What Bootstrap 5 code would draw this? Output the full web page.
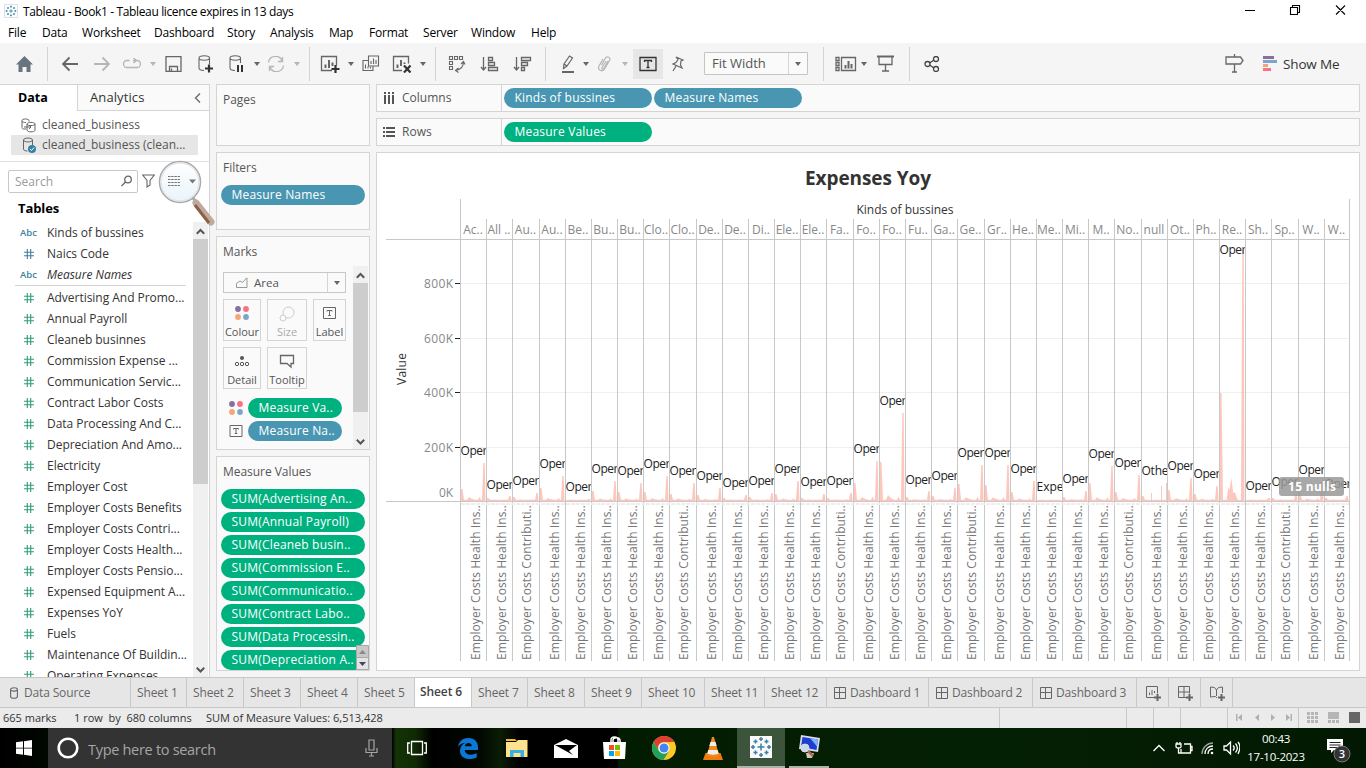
<!DOCTYPE html>
<html lang="en">
<head>
<meta charset="utf-8">
<title>Tableau - Book1</title>
<link href="https://cdn.jsdelivr.net/npm/bootstrap@5.3.0/dist/css/bootstrap.min.css" rel="stylesheet">
<style>
body{width:1366px;height:768px;overflow:hidden;font:12px/20px "Open Sans","Noto Sans",sans-serif;color:#333;background:#f5f5f5}
svg{display:block;flex:none}
.ln{fill:none;stroke:#666;stroke-width:1.3}
.titlebar{height:22px;background:#fff;color:#000;letter-spacing:-.36px}
.titlebar span{margin-left:1px;padding-top:2px}
.menus{height:21px;background:#fff;color:#000;display:grid;grid-template-columns:34px 40px 72px 73px 43px 59px 40px 54px 48px 60px 60px;padding-left:8px;line-height:22px;letter-spacing:-.2px}
.tools{height:41px;display:grid;align-items:center;grid-template-columns:47px 14px 32px 29px 28px 15px 33px 31px 25px 13px 27px 15px 11px 28px 14px 30px 28px 15px 13px 32px 33px 32px 16px 22px 14px 25px 11px 38px 33px 119px 12px 26px 16px 32px 15px 301px 38px 1fr}
.vsep{width:1px;height:34px;background:#d4d4d4}
.car{width:0;height:0;border:3px solid transparent;border-top:4px solid #666;border-bottom:0}
.car.off{border-top-color:#b5b5b5}
.tbtn{width:30px;height:30px;background:#e6e6e6;padding:5px 5px}
.fit{width:104px;height:23px;border:1px solid #c4c4c4;border-radius:1px;background:#fafafa;font-size:13px;line-height:21px;color:#555}
.boxcar{border-left:1px solid #d4d4d4;height:100%;width:19px}
.side{width:210px;background:#fff;border-top:1px solid #d4d4d4;border-right:1px solid #d4d4d4}
.side-tabs{height:26px;font-size:13px;line-height:25px;color:#333}
.side-tabs .on{width:77px;padding-left:18px;font-weight:700;color:#000;font-size:12.5px}
.side-tabs .off{width:132px;padding-left:12px;background:#fafafa;border-left:1px solid #d4d4d4;border-bottom:1px solid #d4d4d4;letter-spacing:.1px}
.src{height:20px;margin:0 11px;padding-left:10px;gap:6px;color:#555}
.src.sel{background:#e6e6e6}
.finder{width:130px;height:23px;border:1px solid #c8c8c8;border-radius:2px;color:#9a9a9a;padding-left:6px;line-height:21px}
.fld{height:21px;line-height:21px;padding-left:20px;color:#333;letter-spacing:-.03px}
.fld b{width:27px;font-size:9.5px;color:#3e7f9e;font-weight:600}
.fld span{white-space:nowrap}
.sbar{width:15px;background:#f0f0f0}
.sbar u{display:block;background:#cdcdcd}
.shelf{background:#fafafa;border:1px solid #d4d4d4;color:#555}
.mid{width:154px;gap:6px}
.mid .hd{padding-left:6px;line-height:30px;height:32px;letter-spacing:-.04px}
.pill{height:20px;border-radius:10px;background:#4996b2;color:#fff;padding-left:10.5px;line-height:19px;white-space:nowrap;overflow:hidden;font-weight:500;letter-spacing:.2px}
.pill.g{background:#00b180}
.mksel{width:123px;height:21px;border:1px solid #c8c8c8;line-height:19px;font-size:11.5px}
.mk{height:42px;border:1px solid #d4d4d4;text-align:center;font-size:11px;line-height:14px;padding-top:6px}
.mk svg{margin:0 auto 3px}
.main-col{gap:6px;width:984px}
.shelf-row{height:28px}
.shelf-row .lab{width:125px;height:26px;border-right:1px solid #d4d4d4;line-height:26px;gap:7px;padding-left:6px;font-size:12px}
.view{background:#fff;border:1px solid #d4d4d4;height:519px}
.sheets{height:31px;background:#e6e6e6;border-top:1px solid #c8c8c8;border-bottom:1px solid #c8c8c8;display:grid;grid-template-columns:131px 56px 57px 57px 57px 57px 57px 56px 57px 57px 63px 60px 62px 102px 104px 104px 32px 32px 32px 1fr;line-height:30px;color:#666}
.sheets>div{border-right:1px solid #c8c8c8;padding-left:6px;white-space:nowrap;overflow:hidden;letter-spacing:-.15px}
.sheets>div:last-child{border:0}
.sheets .cur{background:#fff;font-weight:600;color:#444;letter-spacing:-.1px;line-height:27px;padding-left:5px}
.status{height:20px;background:#ebebeb;display:grid;grid-template-columns:74px 132px 794px 127px 27px 27px 47px 71px 1fr;font-size:11px;line-height:20px;color:#333}
.status>div:nth-child(n+3):nth-child(-n+8){border-right:1px solid #c8c8c8}
.task{height:40px;color:#fff;background:linear-gradient(90deg,#000 0,#010701 48px,#000 392px,#143307 396px,#102a04 415px,#000 432px,#020802 480px,#0a1c05 500px,#000 520px,#000 617px,#021c02 619px,#042004 1000px,#021802)}
.ask{width:344px;background:#333;color:#a6a6a6;font-size:14.5px;line-height:40px}
.tk{width:49px;height:40px}
.edge-slot{margin-left:2px}
.hot{background:#3c533c;border-bottom:2px solid #a9b5a9;width:48px}
.showme{font-size:13.5px;margin-left:6px;color:#333;letter-spacing:-.15px}
.tables{font-weight:700;font-size:13px;color:#000;padding-left:18px;height:22px;line-height:17px;letter-spacing:-.1px}
.lens{position:absolute;left:158px;top:-2px;z-index:5}
.findrow{z-index:5;height:40px;margin-top:6px}
.mks{padding-left:6px;padding-top:3px}
.marea{margin-left:12px!important}
.mkgrid{display:grid;grid-template-columns:38px 40px 33px;gap:6px;margin-top:6px}
.mkp{margin-top:9px}.mkp+.mkp{margin-top:3px}
.mkp svg{margin:0 5px 0 6px}.mkp .pill{width:94px}
.pill.top{width:148px;margin-left:2px}
#mv .pill{margin:0 4px 3px}
.ds{padding-left:9px!important;gap:5px}
.db{padding-left:7px!important;gap:4px}
.nw svg{margin:8px 0 0 3px}
.last{width:40px;margin-left:4px;border-bottom:2px solid #a9b5a9}
.clk{font-size:11.500px;line-height:18px;width:74px;margin-left:-1px;letter-spacing:-.25px}
.ntf{margin:4px 12px 0 13px}
</style>
</head>
<body class="d-flex flex-column">
<svg width="0" height="0" class="position-absolute"><defs>
<symbol id="tb" viewBox="0 0 22 22"><path fill="none" stroke-width="1.500" stroke="#3a7fa8" d="M11 7.500v7M7.500 11h7M11 1v4M9 3h4M11 17v4M9 19h4M3 9v4M1 11h4M19 9v4M17 11h4M5.500 3.500v4M3.500 5.500h4M16.500 3.500v4M14.500 5.500h4M5.500 14.500v4M3.500 16.500h4M16.500 14.500v4M14.500 16.500h4"/></symbol>
<symbol id="hash" viewBox="0 0 10 10"><path fill="none" stroke="currentColor" stroke-width="1.1" d="M3.300 0v10M6.700 0v10M0 3.300h10M0 6.700h10"/></symbol>
<symbol id="cyl" viewBox="0 0 10 12"><path class="ln" style="stroke-width:1.1" d="M1.600 2.500v7c0 2.400 6.800 2.400 6.800 0v-7C8.400.200 1.600.200 1.600 2.500s6.800 2 6.800 0"/></symbol>
<symbol id="dash" viewBox="0 0 12 12"><path class="ln" style="stroke-width:1" d="M.5.5h11v11H.5zM.5 5.500h11M5.500.5v11"/></symbol>
<symbol id="dots" viewBox="0 0 14 14"><circle cx="3" cy="3" r="2.900" fill="#87709b"/><circle cx="11" cy="3" r="2.900" fill="#fb7182"/><circle cx="3" cy="11" r="2.900" fill="#f6a576"/><circle cx="11" cy="11" r="2.900" fill="#7ea4cc"/></symbol>
<symbol id="tee" viewBox="0 0 13 12"><path class="ln" style="stroke-width:1" d="M.5.5h12v11H.5zM4 4.500v-1h5v1M6.500 3.500v5M5.200 8.500h2.600"/></symbol>
<symbol id="up" viewBox="0 0 9 6"><path fill="none" stroke="#555" stroke-width="2" d="M.8 5.200 4.500 1.500l3.700 3.700"/></symbol>
</defs></svg>

<div class="titlebar d-flex align-items-center justify-content-between">
 <div class="d-flex align-items-center"><svg class="ms-1 me-1 border" width="14" height="14"><use href="#tb"/></svg><span>Tableau - Book1 - Tableau licence expires in 13 days</span></div>
 <svg width="122" height="22" fill="none" stroke="#000" stroke-width="1.100"><path d="M1 10.500h10M46.500 7.500h7v7h-7zM48.500 7.500v-2h7v7h-2M92 5.500l9 9M101 5.500l-9 9"/></svg>
</div>
<div class="menus"><span>File</span><span>Data</span><span>Worksheet</span><span>Dashboard</span><span>Story</span><span>Analysis</span><span>Map</span><span>Format</span><span>Server</span><span>Window</span><span>Help</span></div>

<div class="tools">
 <svg class="ms-3" width="17" height="16"><path fill="#6a7480" d="M8.500 0 17 8.500h-2.500V16h-4v-5h-4v5h-4V8.500H0z"/></svg>
 <i class="vsep"></i>
 <svg width="18" height="16" class="ln" style="stroke-width:1.800"><path d="M17 8H2M8.500 1.500 2 8l6.500 6.500"/></svg>
 <svg width="18" height="16" fill="none" stroke="#b5b5b5" stroke-width="1.800"><path d="M1 8h15M9.500 1.500 16 8l-6.500 6.500"/></svg>
 <svg width="20" height="12" fill="none" stroke="#b5b5b5" stroke-width="1.300"><path d="M7.500 2.500H5a3.500 3.500 0 0 0 0 7h10a3.500 3.500 0 0 0 0-7h-4M11.500 0l3 2.500-3 2.500"/></svg>
 <i class="car off"></i>
 <svg width="17" height="16" class="ln"><path d="M1 .7h15v14.600H1zM4.500 15v-4.500h8V15M6.500 12.500V15"/></svg>
 <svg width="18" height="20" class="ln" style="stroke-width:1.100"><path d="M1 4v10c0 2 2 2.500 5 2.500M11.500 10V4C11.500 1 1 1 1 4s10.500 3 10.500 0"/><path stroke="#333" style="stroke-width:2.200" d="M11 10.500v8M7 14.500h8"/></svg>
 <svg width="18" height="20" class="ln" style="stroke-width:1.100"><path d="M1 4v10c0 2 2 2.500 5 2.500M11.500 9V4C11.500 1 1 1 1 4s10.500 3 10.500 0"/><path stroke="#333" style="stroke-width:2" d="M9 11v7M13 11v7"/></svg>
 <i class="car"></i>
 <svg width="18" height="16" fill="none" stroke="#b5b5b5" stroke-width="1.300"><path d="M1.500 6.500A7 7 0 0 1 15 5M16.500 9.500A7 7 0 0 1 3 11M15.500 1v4.500H11M2.500 15v-4.500H7"/></svg>
 <i class="car off"></i>
 <i class="vsep"></i>
 <svg width="20" height="18" class="ln"><path d="M12 15.500H1.500V1.500h15v9"/><path stroke-width="2" d="M5.500 13V9.500M9 13V5M12.500 11V7.500"/><path stroke="#333" stroke-width="2.200" d="M15.500 10v8M11.500 14h8"/></svg>
 <i class="car"></i>
 <svg width="18" height="17" class="ln" style="stroke-width:1.100"><path d="M6.500 1h10v10h-10zM6.500 5.500H1v10h10V11M9 9V6M11.500 9V3.500M14 9V5M3.500 13.500v-4M6 13.500v-2M8.500 13.500v-1.500"/></svg>
 <svg width="20" height="18" class="ln"><path d="M10 15.500H1.500V1.500h15v7"/><path stroke-width="2" d="M5.500 13V9.500M9 11V5M12.500 9V7.500"/><path stroke="#333" stroke-width="2.200" d="m12 10.500 6.500 7M18.500 10.500l-6.500 7"/></svg>
 <i class="car"></i>
 <i class="vsep"></i>
 <svg width="18" height="18" class="ln" style="stroke-width:1.100"><path d="M1.500 1.500h3v3h-3zM6.500 1.500h3v3h-3zM11.500 1.500h3v3h-3zM1.500 6.500h3v3h-3zM1.500 11.500h3v3h-3zM15.500 7c0 5-3 7.500-7.500 8.500M13 9l2.500-2.500L17 9.500M10.500 13 7.500 15.500l3 2"/></svg>
 <svg width="20" height="16" class="ln"><path d="M3.500 1v13M1 11l2.500 3L6 11M8.500 1.500h4v3h-4zM8.500 6.500h6v3h-6zM8.500 11.500h9v3h-9z"/></svg>
 <svg width="20" height="16" class="ln"><path d="M3.500 1v13M1 11l2.500 3L6 11M8.500 1.500h9v3h-9zM8.500 6.500h6v3h-6zM8.500 11.500h3v3h-3z"/></svg>
 <i class="vsep"></i>
 <svg width="14" height="18" class="ln" style="stroke-width:1.200"><path d="m3 9 5.500-8 3 2L6 11l-3.500 2.500zM3 9l3 2"/><path style="stroke-width:2" d="M1 17h12"/></svg>
 <i class="car"></i>
 <svg width="16" height="17" fill="none" stroke="#b5b5b5" stroke-width="1.200"><path d="m4.500 10 4-7c1.500-2.500 5.500-.5 4 2.500l-5 8.500c-2 3.500-7.500 1-5.500-3L6 4M9 6l-4 6.500c-.7 1.500 1 2.200 1.800 1L11 6"/></svg>
 <i class="car off"></i>
 <div class="tbtn"><svg width="20" height="20" fill="none" stroke="#333" stroke-width="1.300"><path d="M2 3.500h16v13H2zM6.500 8V6.500h7V8M10 6.500v7M8.500 13.500h3"/></svg></div>
 <svg width="14" height="16" class="ln" style="stroke-width:1.200"><path d="m5 1 7 3-2 1-.5 4 1.500 3-9-4 3-1.500L7 3.500zM5 10l-3 5"/></svg>
 <div class="fit d-flex align-items-center justify-content-between"><span style="padding-left:7px">Fit Width</span><div class="boxcar d-flex align-items-center justify-content-center"><i class="car"></i></div></div>
 <i class="vsep"></i>
 <svg width="22" height="16" class="ln"><path d="M1 1.500h3v3H1zM1 6.500h3v3H1zM1 11.500h3v3H1zM6.500 1.500h14v13h-14z"/><path stroke-width="2" d="M10.500 12.500V9M13.500 12.500V5M16.500 12.500V8"/></svg>
 <i class="car"></i>
 <svg width="17" height="17" class="ln"><path stroke-width="2" d="M0 1.500h17"/><path d="M2 1.500v8h13v-8M8.500 9.500v6M5 16h7"/></svg>
 <i class="vsep"></i>
 <svg width="16" height="16" class="ln" style="stroke:#444"><circle cx="3.500" cy="8" r="2.500"/><circle cx="12" cy="3" r="2.500"/><circle cx="12" cy="13" r="2.500"/><path d="m5.500 7 4.500-3M5.500 9l4.500 3"/></svg>
 <svg width="20" height="19" class="ln"><path d="M9.500 0v3M1 3h14.500l2.500 3.500-2.500 3.500H1zM9.500 10v8M7 18h5"/></svg>
 <div class="d-flex align-items-center"><svg width="14" height="16"><path fill="#87709b" d="M0 0h11v3H0z"/><path fill="#7ea4cc" d="M0 4h14v3H0z"/><path fill="#f6a576" d="M0 8h5v3H0z"/><path fill="#fb7182" d="M0 12h8v3H0z"/></svg><span class="showme">Show Me</span></div>
</div>

<div class="d-flex" style="height:593px">
 <div class="side d-flex flex-column">
  <div class="side-tabs d-flex"><div class="on">Data</div><div class="off d-flex justify-content-between align-items-center"><span>Analytics</span><svg class="me-2" width="7" height="10" style="position:relative"><path class="ln" d="M6 .5 1.500 5 6 9.500"/></svg></div></div>
  <div class="src d-flex align-items-center mt-1"><svg width="15" height="15"><path class="ln" style="stroke-width:1" d="M5 11H2.500C1.500 11 1 10.500 1 9.500v-7c0-2 7-2 7 0v1M1 3c0 1 2 1.500 4 1.500M6 6v6c0 2.500 8 2.500 8 0V6c0-2.200-8-2.200-8 0s8 2 8 0M3 9h7M8 7l2 2-2 2"/></svg><span>cleaned_business</span></div>
  <div class="src sel d-flex align-items-center"><svg width="15" height="16"><path class="ln" style="stroke-width:1" d="M2.500 3v9c0 1.500 2 2 4 2M11.500 8V3c0-2.600-9-2.600-9 0s9 2.600 9 0"/><circle cx="11" cy="12" r="4" fill="#3581a6"/><path d="m9 12 1.500 1.500L13 10.500" fill="none" stroke="#fff"/></svg><span>cleaned_business (clean...</span></div>
  <div class="border-top findrow d-flex align-items-center ps-2 position-relative">
   <div class="finder d-flex align-items-center justify-content-between"><span>Search</span><svg class="me-1" width="12" height="12"><circle class="ln" cx="7" cy="4.500" r="3.300"/><path class="ln" d="m4.500 7-4 4"/></svg></div>
   <svg class="ms-1" width="13" height="14"><path class="ln" style="stroke-width:1.100" d="M.7 1h11.600L8 6.500V11l-3 2V6.500z"/></svg>
   <svg class="lens" width="62" height="72"><defs><linearGradient id="gl" x1="0" x2="0" y1="0" y2="1"><stop offset="0" stop-color="#fff"/><stop offset="1" stop-color="#e9f4fc"/></linearGradient></defs><path d="m35 38 18 23" stroke="#aaa" stroke-width="3"/><path d="m38 43 15 19" stroke="#c0aa9c" stroke-width="7" stroke-linecap="round"/><path d="m37 45 14 18" stroke="#8a6248" stroke-width="3"/><circle cx="22" cy="22" r="20.500" fill="url(#gl)" stroke="#a9a9a9" stroke-width="1.500"/><circle cx="22" cy="22" r="18.800" fill="none" stroke="#e3e3e3"/><path stroke="#777" stroke-width="1" stroke-dasharray="2.500 .7" d="M10 16.500h12M10 19.500h12M10 22.500h12M10 25.500h12"/><path fill="#777" d="M31 19.500h7l-3.500 4z"/></svg>
  </div>
  <div class="tables">Tables</div>
  <div class="d-flex overflow-hidden flex-grow-1"><div id="fields" class="overflow-hidden" style="width:193px"></div>
   <div class="sbar d-flex flex-column align-items-center"><svg class="my-1" width="9" height="9" style="padding-top:2px"><use href="#up"/></svg><u class="w-100" style="height:245px"></u><svg class="mt-auto mb-1" width="9" height="6" style="transform:scaleY(-1)"><use href="#up"/></svg></div></div>
 </div>

 <div class="mid d-flex flex-column" style="margin-left:6px">
  <div class="shelf" style="height:62px"><div class="hd">Pages</div></div>
  <div class="shelf" style="height:78px"><div class="hd">Filters</div><div class="pill mx-1">Measure Names</div></div>
  <div class="shelf d-flex" style="height:214px">
   <div style="width:136px"><div class="hd">Marks</div>
    <div class="mks">
     <div class="mksel d-flex"><svg class="mt-1 me-2 marea" width="12" height="11"><path fill="none" stroke="#999" d="M.5 10.500v-4L4 4l2.500 1.500 4-4.500h.500v9.500z"/></svg><span class="flex-grow-1" style="margin-left:-2px">Area</span><div class="boxcar d-flex align-items-center justify-content-center" style="width:18px"><i class="car"></i></div></div>
     <div class="mkgrid">
      <div class="mk"><svg width="14" height="16" viewBox="0 0 14 16"><use href="#dots" width="14" height="14"/></svg>Colour</div>
      <div class="mk" style="color:#aaa"><svg width="16" height="16" fill="none" stroke="#ccc"><circle cx="9.500" cy="6.500" r="5.500"/><circle cx="4" cy="12" r="3" fill="#fafafa"/></svg>Size</div>
      <div class="mk"><svg width="14" height="16" viewBox="0 -1 14 16"><use href="#tee" width="13" height="12"/></svg>Label</div>
      <div class="mk"><svg width="16" height="16" fill="none" stroke="#555"><circle cx="8" cy="4" r="2" fill="#555" stroke="none"/><circle cx="3" cy="10" r="1.700"/><circle cx="8" cy="10" r="1.700"/><circle cx="13" cy="10" r="1.700"/></svg>Detail</div>
      <div class="mk"><svg width="16" height="16"><path class="ln" d="M1.500 1.500h13v8H12V13L8 9.500H1.500z"/></svg>Tooltip</div>
     </div>
     <div class="d-flex align-items-center mkp"><svg width="14" height="14"><use href="#dots"/></svg><div class="pill g">Measure Va..</div></div>
     <div class="d-flex align-items-center mkp"><svg width="14" height="12"><use href="#tee"/></svg><div class="pill">Measure Na..</div></div>
    </div></div>
   <div class="sbar d-flex flex-column align-items-center" style="margin-top:29px"><svg class="my-1" width="9" height="9" style="padding-top:2px"><use href="#up"/></svg><u class="w-100" style="height:129px"></u><svg class="mt-auto mb-1" width="9" height="6" style="transform:scaleY(-1)"><use href="#up"/></svg></div>
  </div>
  <div class="shelf position-relative overflow-hidden" style="height:215px"><div class="hd">Measure Values</div><div id="mv"></div>
   <svg class="position-absolute bottom-0 end-0" width="13" height="25"><path fill="#c8c8c8" stroke="#aaa" d="M.5.500h12v12H.500z"/><path fill="#e4e4e4" stroke="#aaa" d="M.5 12.500h12v12H.500z"/><path fill="#888" d="m3 9 3.500-4L10 9z"/><path fill="#3c4a66" d="m3 17 3.500 4 3.500-4z"/></svg></div>
 </div>

 <div class="main-col d-flex flex-column" style="margin-left:6px">
  <div class="shelf shelf-row d-flex align-items-center"><div class="lab d-flex align-items-center"><svg width="12" height="12"><path fill="#555" d="M1 0h2v2H1zM5 0h2v2H5zM9 0h2v2H9zM1 3h2v9H1zM5 3h2v9H5zM9 3h2v9H9z"/></svg>Columns</div><div class="pill top">Kinds of bussines</div><div class="pill top">Measure Names</div></div>
  <div class="shelf shelf-row d-flex align-items-center"><div class="lab d-flex align-items-center"><svg width="12" height="12"><path fill="#555" d="M0 1h2v2H0zM0 5h2v2H0zM0 9h2v2H0zM3 1h9v2H3zM3 5h9v2H3zM3 9h9v2H3z"/></svg>Rows</div><div class="pill top g">Measure Values</div></div>
  <div class="view"><svg id="chart" width="982" height="517" viewBox="377 153 982 517"></svg></div>
 </div>
</div>

<div class="sheets">
 <div class="d-flex align-items-center ds"><svg width="10" height="12"><use href="#cyl"/></svg>Data Source</div>
 <div>Sheet 1</div><div>Sheet 2</div><div>Sheet 3</div><div>Sheet 4</div><div>Sheet 5</div><div class="cur">Sheet 6</div><div>Sheet 7</div><div>Sheet 8</div><div>Sheet 9</div><div>Sheet 10</div><div>Sheet 11</div><div>Sheet 12</div>
 <div class="d-flex align-items-center db"><svg width="12" height="12"><use href="#dash"/></svg>Dashboard 1</div>
 <div class="d-flex align-items-center db"><svg width="12" height="12"><use href="#dash"/></svg>Dashboard 2</div>
 <div class="d-flex align-items-center db"><svg width="12" height="12"><use href="#dash"/></svg>Dashboard 3</div>
 <div class="nw"><svg width="18" height="16" class="ln" style="stroke-width:1"><path d="M8 11.500H.500V.500h11v7M3.500 9V6.500M6 9V4M8.500 7V5"/><path style="stroke-width:2" d="M11.500 8v7M8 11.500h7"/></svg></div>
 <div class="nw"><svg width="18" height="16" class="ln" style="stroke-width:1"><path d="M8 11.500H.500V.500h11v7M.5 6h11M6 .500v11"/><path style="stroke-width:2" d="M11.500 8v7M8 11.500h7"/></svg></div>
 <div class="nw"><svg width="18" height="16" class="ln" style="stroke-width:1"><path d="m7 12-1.500-1.500L.500 11V1l4 .5L6.500 4l2-2.500 4-.5v6M6.500 4v6"/><path style="stroke-width:2" d="M11.500 8v7M8 11.500h7"/></svg></div><div></div>
</div>
<div class="status"><div style="padding-left:3px">665 marks</div><div>1 row&nbsp; by&nbsp; 680 columns</div><div>SUM of Measure Values: 6,513,428</div><div></div><div></div><div></div><div></div>
 <div><svg width="70" height="20" fill="#b0b0b0"><path d="M8 6h1.500v7H8zM14 6v7l-4-3.500zM31 6v7l-4-3.500zM43 6v7l4-3.500zM58 6v7l4-3.500zM62.500 6H64v7h-1.500z"/></svg></div>
 <div><svg width="66" height="20"><path fill="#b5b5b5" d="M8 4h3v3H8zM12 4h3v3h-3zM16 4h3v3h-3zM8 8h3v3H8zM12 8h3v3h-3zM16 8h3v3h-3zM8 12h3v3H8zM12 12h3v3h-3zM16 12h3v3h-3zM29 4h11v7H29zM29 12h3v3h-3zM33 12h3v3h-3zM37 12h3v3h-3z"/><path fill="#666" d="M50 4h11v11H50z"/></svg></div></div>

<div class="task d-flex">
 <div class="d-flex align-items-center justify-content-center" style="width:48px"><svg width="16" height="16"><path fill="#fff" d="M0 2.300 7 1.300v6.400H0zM8 1.200 16 0v7.700H8zM0 8.500h7v6.300l-7-1zM8 8.500h8V16l-8-1.200z"/></svg></div>
 <div class="ask d-flex align-items-center"><svg style="margin:0 9px" width="22" height="22"><circle cx="11" cy="11" r="9.300" fill="none" stroke="#fff" stroke-width="2.600"/></svg><span class="pt-1" style="line-height:36px;letter-spacing:-.3px">Type here to search</span><svg class="ms-auto" style="margin-right:14px" width="13" height="18" fill="none" stroke="#a6a6a6" stroke-width="1.200"><path d="M4 1h5v10H4zM1 9v4.500h11V9M6.500 13.500V17M4 17h5"/></svg></div>
 <div class="tk d-flex align-items-center justify-content-center"><svg width="20" height="16" fill="none" stroke="#fff" stroke-width="1.300"><path d="M4.500 1.500h11v13h-11zM3 3H.700v10H3M17 3h2.300v10H17"/></svg></div>
 <div class="tk edge-slot d-flex align-items-center justify-content-center"><svg width="20" height="21" viewBox="0 0 20 21"><path fill="#0a78d7" d="M0 9C1 3 5 0 10.500 0 17 0 20 4.500 20 9v3H6.700c.3 5 7 6 12 3v4.500C11 23 2 20.500 2 13c0-4 2-6.500 5-8C3.500 5 1.500 7 0 9m6.800-.7h7C13.600 4 7.500 4 6.800 8.300"/></svg></div>
 <div class="tk d-flex align-items-center justify-content-center"><svg width="22" height="19"><path fill="#f0b93a" d="M0 0h9l2 2h-11z"/><path fill="#fde38d" d="M0 3h10l2-2h9.500v17H0z"/><path fill="#38b0e4" d="M4 18v-7h14v7h-3.500v-4h-7v4z"/></svg></div>
 <div class="tk d-flex align-items-center justify-content-center"><svg width="24" height="19"><path fill="#fff" d="M0 6 12 0l12 6v13H0z"/><path fill="#000" d="m1 6 22 0-8 6 4 4z"/></svg></div>
 <div class="tk d-flex align-items-center justify-content-center"><svg width="24" height="24"><path fill="none" stroke="#fff" stroke-width="1.500" d="M8 6V4c0-4 7-4 7 0v2M10 6V4c0-2 6-4 7 0v2"/><path fill="#fff" d="M0 6h23l-1 17H1z"/><path fill="#f25022" d="M6 9h5v5H6z"/><path fill="#7fba00" d="M12 9h5v5h-5z"/><path fill="#00a4ef" d="M6 15h5v5H6z"/><path fill="#ffb900" d="M12 15h5v5h-5z"/></svg></div>
 <div class="tk d-flex align-items-center justify-content-center"><svg width="24" height="24"><circle cx="12" cy="12" r="12" fill="#fbc926"/><path fill="#de3f32" d="M1.600 6A12 12 0 0 1 22.400 6H12a6 6 0 0 0-5.500 8.500z"/><path fill="#20a05a" d="M1.600 6A12 12 0 0 0 11.500 24l5.500-9-5 3-5-3z"/><circle cx="12" cy="12" r="5.600" fill="#fff"/><circle cx="12" cy="12" r="4.500" fill="#4285f4"/></svg></div>
 <div class="tk d-flex align-items-center justify-content-center"><svg width="20" height="23"><path fill="#f07c0c" d="M2.500 16h15l2.500 7H0z"/><path fill="#f58a1c" d="m9 0h2l5 18c-3 2-9 2-12 0z"/><path fill="#eee" d="M7.500 5h5l1.200 4H6.300zM5.300 13h9.400l1 3.500c-3 1.500-8.500 1.500-11.500 0z"/></svg></div>
 <div class="tk hot d-flex align-items-center justify-content-center"><svg width="22" height="22" style="background:#fafafa"><use href="#tb"/></svg></div>
 <div class="tk d-flex align-items-center justify-content-center last"><svg width="23" height="24"><path fill="#d9dde6" d="m3 0 19 3-2 14L1 14z"/><path fill="#1b3fd0" d="m4.500 2 15.500 2.500-1.500 10.500L3 12z"/><path fill="#7fb0ff" d="m12 3 8 1.500-1 7z"/><path fill="#d0c8c0" d="M8 18h8l-2 5H9z"/><circle cx="7" cy="13" r="4" fill="#c5d9ef" stroke="#ddd"/><path stroke="#b06a50" stroke-width="2.500" d="m10 16 5 5"/></svg></div>
 <div class="ms-auto d-flex align-items-center tray"><svg width="88" height="20" fill="none" stroke="#fff" stroke-width="1.300"><path d="m1.500 13 5.500-5.500 5.500 5.500M32 6h6.500v9H29V11M38.500 8.500h1.500v4h-1.500M25 4v2M28 4v2M24 6h5v2.500c0 2-5 2-5 0zM26.500 10v5H29"/><path opacity=".6" d="M50 16c0-6 5-11 11-11"/><path d="M53 16c0-5 3.500-8 8-8M56 16c0-3 2-5 5-5"/><circle cx="60" cy="15" r="1.300" fill="#fff" stroke="none"/><path d="M72 8h2.500l4-4v12l-4-4H72zM81 7.500c1.500 1.500 1.500 3.500 0 5M83.500 5.500c2.500 3 2.500 6 0 9M86 4c3.500 4 1.500 9 0 12"/></svg>
  <div class="clk text-center">00:43<br>17-10-2023</div>
  <svg width="28" height="28" viewBox="0 0 28 28" class="ntf"><path fill="#fff" d="M1 3h16v11H8l-3 3v-3H1z"/><path stroke="#222" d="M3.500 6.500h11M3.500 9h11M3.500 11.500h8"/><circle cx="16" cy="18" r="8" fill="#333" stroke="#777"/><text x="16" y="22" text-anchor="middle" font-size="11" font-weight="600" fill="#fff">3</text></svg></div>
</div>
<script src="https://cdn.jsdelivr.net/npm/bootstrap@5.3.0/dist/js/bootstrap.bundle.min.js"></script>
<script>
var dims = [['Abc','Kinds of bussines'],['#','Naics Code'],['Abc','<em>Measure Names</em>']];
var meas = ['Advertising And Promo...','Annual Payroll','Cleaneb businnes','Commission Expense ...','Communication Servic...','Contract Labor Costs','Data Processing And C...','Depreciation And Amo...','Electricity','Employer Cost','Employer Costs Benefits','Employer Costs Contri...','Employer Costs Health...','Employer Costs Pensio...','Expensed Equipment A...','Expenses YoY','Fuels','Maintenance Of Buildin...','Operating Expenses'];
function hash(c){return '<b style="color:'+c+'"><svg width="10" height="10" style="margin:6px 0 0 4px"><use href="#hash"/></svg></b>';}
document.getElementById('fields').innerHTML =
 dims.map(function(d){return '<div class="fld d-flex">'+(d[0]=='#'?hash('#3e7f9e'):'<b>'+d[0]+'</b>')+'<span>'+d[1]+'</span></div>';}).join('')+
 '<div style="margin:0 7px 0 15px;border-top:1px solid #d4d4d4;height:2px"></div>'+
 meas.map(function(m){return '<div class="fld d-flex">'+hash('#2f9e77')+'<span>'+m+'</span></div>';}).join('');
document.getElementById('mv').innerHTML = ['Advertising An..','Annual Payroll)','Cleaneb busin..','Commission E..','Communicatio..','Contract Labo..','Data Processin..','Depreciation A..'].map(function(m){return '<div class="pill g">SUM('+m+'</div>';}).join('');

var X=[460,486,512,539,565,591,617,643,669,696,722,748,774,800,826,853,879,905,931,957,984,1010,1036,1062,1088,1114,1141,1167,1193,1219,1245,1271,1298,1324,1349];
var H='Ac..|All ..|Au..|Au..|Be..|Bu..|Bu..|Clo..|Clo..|De..|De..|Di..|Ele..|Ele..|Fa..|Fo..|Fo..|Fu..|Ga..|Ge..|Gr..|He..|Me..|Mi..|M..|No..|null|Ot..|Ph..|Re..|Sh..|Sp..|W..|W..'.split('|');
var L=[451,485,481,464,487,469,471,464,471,476,483,481,469,482,481,449,401,480,476,453,453,469,487,479,454,463,471,466,474,250,486,482,470,484];
/* tops of the first and last spike of every pane */
var A=[489,498,497,488,500,491,492,492,494,495,498,497,494,498,498,483,462,497,496,484,485,492,500,497,483,492,496,490,494,393,500,498,494,498];
var B=[463,496,493,476,499,481,483,476,483,488,495,493,481,494,493,461,413,491,488,465,465,481,500,491,466,475,483,478,486,250,498,494,481,496];
var s='<g font-size="12" fill="#333"><text x="868" y="185" font-size="19" font-weight="700" text-anchor="middle" textLength="126">Expenses Yoy</text><text x="905" y="214" text-anchor="middle" textLength="97">Kinds of bussines</text><text transform="translate(406,369) rotate(-90)" text-anchor="middle" textLength="32">Value</text></g>';
[[283,'800K'],[338,'600K'],[392,'400K'],[447,'200K']].forEach(function(t){s+='<path stroke="#efefef" d="M461 '+(t[0]+.5)+'h888"/><path stroke="#222" d="M455 '+(t[0]+.5)+'h5"/><text x="453" y="'+(t[0]+5)+'" text-anchor="end" textLength="29" fill="#888">'+t[1]+'</text>';});
s+='<text x="453" y="497" text-anchor="end" textLength="14" fill="#888">0K</text>';
for(var i=0;i<34;i++){var a=X[i]+1,b=X[i+1],hi=i==22||i==26,h=Math.min(5,(501-B[i])/13),r=Math.min(8,(501-B[i])/5);
 if(hi||i==29)h=r=0;
 s+='<path fill="#fdb9ae" fill-opacity=".8" d="M'+a+' 501V'+A[i]+'h1.500L'+(a+3)+' 499.800h3L'+(a+8)+' '+(500-h)+'L'+(a+10)+' '+(500-h/2)+'L'+(a+14)+' 499.800H'+(b-8)+'L'+(b-6.500)+' '+(500-r/2.500)+'L'+(b-5)+' 499.800'+(hi?'':'H'+(b-4)+'L'+(b-2.700)+' '+B[i]+'h1.400')+'L'+(b-.5)+' 500V501z"/>';
 s+='<svg x="'+a+'" y="150" width="'+(b-a)+'" height="400"><text x="-.5" y="'+(L[i]-150+4)+'" textLength="27" fill="#222">'+(i==22?'Expe':i==26?'Othe':'Oper')+'</text></svg>';
 s+='<text x="'+((a+b)/2-.5)+'" y="234" text-anchor="middle" fill="#888">'+H[i]+'</text>';
 var c=[2,8,14,19,25,31].indexOf(i)>=0;
 s+='<text transform="translate('+(X[i]+(c?19:20))+',660) rotate(-90)" textLength="155" fill="#777">Employer Costs '+(c?'Contributi..':'Health Ins..')+'</text>';}
s+='<path fill="#fdb9ae" fill-opacity=".8" d="M1151 493h1v8h-1zM1161 486h1v15h-1zM1166 483h1v18h-1zM1226.500 500l2-13 1 3 1.800-12 2 15 1.500-1 3 8z"/>';
X.forEach(function(x,i){s+='<path stroke="#c8c8c8" d="M'+(x+.5)+' '+(i==0||i==34?199:219)+'V661"/>';});
s+='<path stroke="#c8c8c8" d="M386 239.500h964M386 501.500h964"/><path stroke="#eee" stroke-dasharray="4 1" stroke-width="2" d="M461 504h888"/>';
s+='<rect x="1279" y="477" width="65" height="19" rx="3" fill="#999" fill-opacity=".85"/><text x="1312" y="491" text-anchor="middle" font-weight="700" fill="#fff" textLength="48">15 nulls</text>';
document.getElementById('chart').innerHTML=s;
</script>
</body>
</html>
